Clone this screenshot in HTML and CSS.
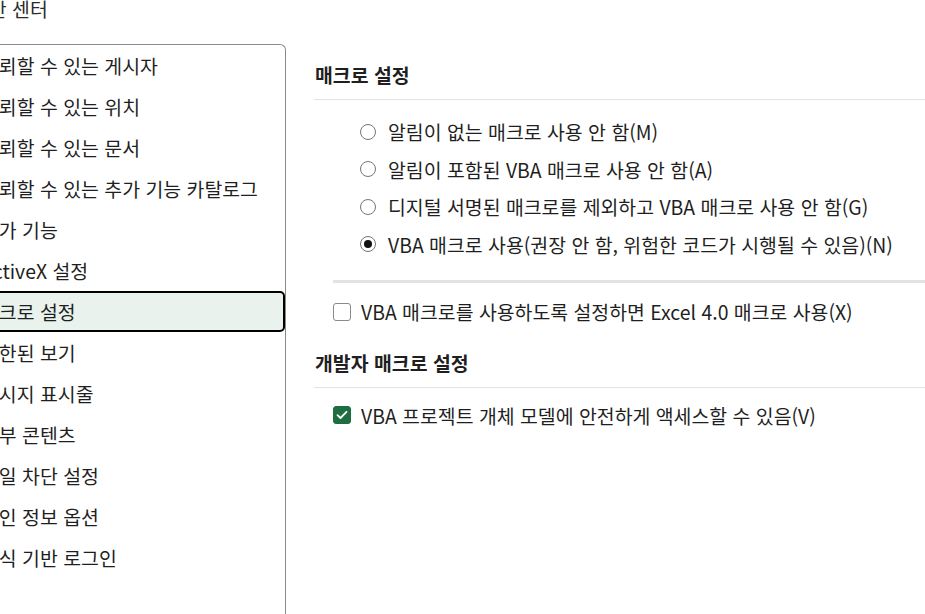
FILE: index.html
```html
<!DOCTYPE html>
<html lang="ko">

<head>
    <meta charset="UTF-8">
    <meta name="viewport" content="width=device-width, initial-scale=1.0">
    <title>보안 센터</title>
    <link rel="stylesheet" href="styles.css">
</head>

<body>
    <div class="page">
        <div class="title">보안 센터</div>

        <div class="main">
            <!-- left category list -->
            <ul class="nav">
                <li class="nav-item">신뢰할 수 있는 게시자</li>
                <li class="nav-item">신뢰할 수 있는 위치</li>
                <li class="nav-item">신뢰할 수 있는 문서</li>
                <li class="nav-item">신뢰할 수 있는 추가 기능 카탈로그</li>
                <li class="nav-item">추가 기능</li>
                <li class="nav-item">ActiveX 설정</li>
                <li class="nav-item selected">매크로 설정</li>
                <li class="nav-item">제한된 보기</li>
                <li class="nav-item">메시지 표시줄</li>
                <li class="nav-item">외부 콘텐츠</li>
                <li class="nav-item">파일 차단 설정</li>
                <li class="nav-item">개인 정보 옵션</li>
                <li class="nav-item">양식 기반 로그인</li>
            </ul>

            <div class="content">
                <h2 class="section-title">매크로 설정</h2>

                <div class="options">
                    <label class="option">
                        <span class="radio"></span>
                        알림이 없는 매크로 사용 안 함(M)
                    </label>
                    <label class="option">
                        <span class="radio"></span>
                        알림이 포함된 VBA 매크로 사용 안 함(A)
                    </label>
                    <label class="option">
                        <span class="radio"></span>
                        디지털 서명된 매크로를 제외하고 VBA 매크로 사용 안 함(G)
                    </label>
                    <label class="option">
                        <span class="radio checked"></span>
                        VBA 매크로 사용(권장 안 함, 위험한 코드가 시행될 수 있음)(N)
                    </label>
                </div>

                <div class="separator"></div>

                <label class="check-row first-check">
                    <span class="checkbox"></span>
                    VBA 매크로를 사용하도록 설정하면 Excel 4.0 매크로 사용(X)
                </label>

                <h2 class="section-title second">개발자 매크로 설정</h2>

                <label class="check-row">
                    <span class="checkbox checked">
                        <svg width="12" height="10" viewBox="0 0 12 10">
                            <path d="M1.5 5.2 L4.5 8 L10.5 1.8" fill="none" stroke="#fff" stroke-width="1.8" stroke-linecap="round" stroke-linejoin="round"/>
                        </svg>
                    </span>
                    VBA 프로젝트 개체 모델에 안전하게 액세스할 수 있음(V)
                </label>
            </div>
        </div>
    </div>
</body>

</html>
```

FILE: styles.css
```css
body {
    margin: 0;
    padding: 0;
    background-color: #ffffff;
    color: #1f1f1f;
    font-family: "Segoe UI", "Noto Sans CJK KR", sans-serif;
    font-size: 19.4px;
    overflow: hidden;
    height: 614px;
}

/* the dialog is cut off on the left, so the page starts a bit outside */
.page {
    margin-left: -40px;
    width: 965px;
}

.title {
    height: 44px;
    line-height: 18px;
    padding-left: 11px;
    color: #2b2b2b;
}

.main {
    display: flex;
    gap: 28px;
}

/* Category list */
.nav {
    list-style: none;
    margin: 0;
    padding: 0;
    width: 324px;
    height: 580px;
    border: 1px solid #8a8a8a;
    border-bottom: none;
    border-radius: 6px 6px 0 0;
    flex-shrink: 0;
}

.nav-item {
    box-sizing: border-box;
    height: 41px;
    display: flex;
    align-items: center;
    padding: 0 0 1px 18px;
    border: 2px solid transparent;
    border-radius: 5px;
    white-space: nowrap;
}

.nav-item.selected {
    border-color: #000000;
    background-color: #e9f2ed;
}

/* Right side */
.content {
    flex: 1;
    min-width: 0;
}

.section-title {
    margin: 0;
    padding: 18px 0 11px 1px;
    font-size: 19.4px;
    line-height: 26px;
    font-weight: 700;
    border-bottom: 1px solid #e3e3e3;
}

.section-title.second {
    padding-top: 19px;
}

.options {
    padding: 13px 0 0 46px;
}

.option,
.check-row {
    height: 37.5px;
    display: flex;
    align-items: center;
    white-space: nowrap;
}

.radio {
    box-sizing: border-box;
    width: 16px;
    height: 16px;
    border: 1.5px solid #757575;
    border-radius: 50%;
    margin-right: 12px;
    display: flex;
    align-items: center;
    justify-content: center;
    flex-shrink: 0;
}

.radio.checked::after {
    content: "";
    width: 8px;
    height: 8px;
    border-radius: 50%;
    background-color: #111111;
}

.separator {
    height: 3px;
    background-color: #e3e3e3;
    margin: 17px 0 0 19px;
}

.check-row {
    padding-left: 19px;
}

.first-check {
    margin-top: 10px;
}

.check-row:last-child {
    margin-top: 9px;
}

.checkbox {
    box-sizing: border-box;
    width: 18px;
    height: 18px;
    border: 1.5px solid #8a8a8a;
    border-radius: 3px;
    margin-right: 10px;
    display: flex;
    align-items: center;
    justify-content: center;
    flex-shrink: 0;
}

.checkbox.checked {
    border-color: #1d6b40;
    background-color: #1f6e42;
}
```
